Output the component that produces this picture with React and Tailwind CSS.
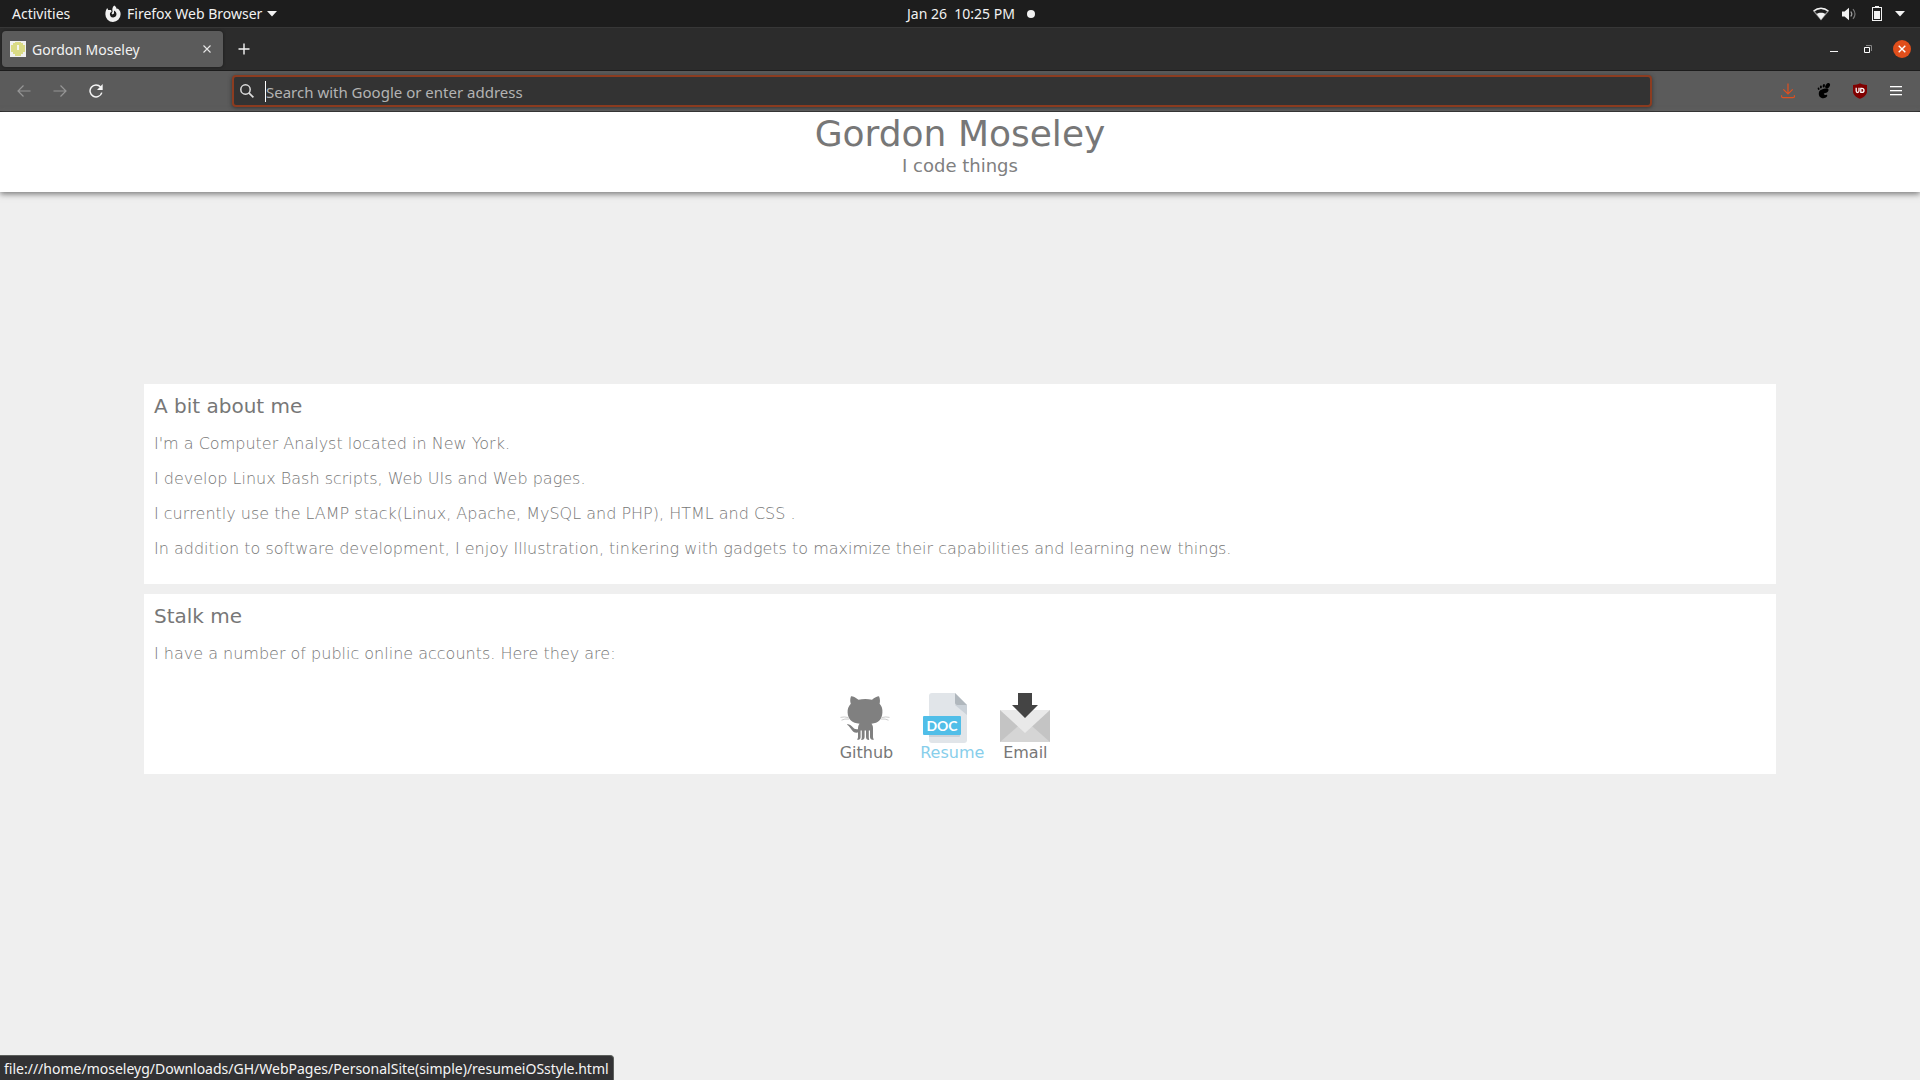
import React from "react";

const paragraphs = [
  "I'm a Computer Analyst located in New York.",
  "I develop Linux Bash scripts, Web UIs and Web pages.",
  "I currently use the LAMP stack(Linux, Apache, MySQL and PHP), HTML and CSS .",
  "In addition to software development, I enjoy Illustration, tinkering with gadgets to maximize their capabilities and learning new things.",
];

function FirefoxIcon() {
  return (
    <svg width="16" height="18" viewBox="0 0 16 18" aria-hidden="true">
      <path
        fill="#f2f2f2"
        d="M9.2 .5C10.8 1.6 11.6 2.8 11.8 4.2L12.6 3.4C14.8 5 15.8 7 15.6 9.6A7.6 7.4 0 0 1 .4 9.4C.3 7 .9 5 2.2 3L3.2 5L6 5L6.6 6.6L5 8C4.4 10.8 6 12.6 8.2 12.5C10.6 12.4 11.8 10.6 11.4 8.6C11 6.8 9.8 6.2 9 5.6L9 8.4L7.4 9.4L6.6 8.4L7.6 6.6C7 4.4 7.4 2 9.2 .5Z"
      />
    </svg>
  );
}

function Caret() {
  return (
    <svg width="10" height="6" viewBox="0 0 10 6" aria-hidden="true">
      <path d="M0 0H10L5 5.5Z" fill="#f2f2f2" />
    </svg>
  );
}

function SystemBar() {
  return (
    <div className="relative flex h-[27px] items-center justify-between bg-[#1d1d1d] text-[14px] text-[#f2f2f2]">
      <div className="flex items-center">
        <button className="ml-3 w-[55px] text-left whitespace-nowrap">Activities</button>
        <button className="ml-[38px] flex items-center whitespace-nowrap">
          <FirefoxIcon />
          <span className="mr-[5px] ml-[6px]">Firefox Web Browser</span>
          <Caret />
        </button>
      </div>
      <button className="absolute left-1/2 flex -translate-x-[53px] items-center whitespace-pre">
        Jan 26  10:25 PM
        <span className="ml-3 size-2 rounded-full bg-[#f2f2f2]" />
      </button>
      <button className="flex items-center" aria-label="System menu">
        <svg width="16" height="14" viewBox="0 0 16 14" aria-hidden="true">
          <path d="M1 4.2C5 .6 11 .6 15 4.2L8 12.5Z" fill="none" stroke="#8e8e8e" strokeWidth="1.2" />
          <path d="M.6 4C5 .4 11 .4 15.4 4" fill="none" stroke="#f2f2f2" strokeWidth="1.4" />
          <path d="M3.5 7C6 5.2 10 5.2 12.5 7L8 12.8Z" fill="#f2f2f2" />
        </svg>
        <svg className="ml-3" width="16" height="14" viewBox="0 0 16 14" aria-hidden="true">
          <path d="M1 4.5H3.6L8 .8V13.2L3.6 9.5H1Z" fill="#f2f2f2" />
          <path d="M9.8 4.5Q11.8 7 9.8 9.5" fill="none" stroke="#a5a5a5" strokeWidth="1.2" />
          <path d="M12 2.2Q16 7 12 11.8" fill="none" stroke="#777777" strokeWidth="1.2" />
        </svg>
        <svg className="ml-[15px]" width="10" height="16" viewBox="0 0 10 16" aria-hidden="true">
          <path d="M3 0H7V1H10V15H0V1H3ZM1 2V14H9V2Z" fill="#f2f2f2" fillRule="evenodd" />
          <path d="M2 5H8V13H2Z" fill="#f2f2f2" />
        </svg>
        <span className="mr-[15px] ml-[13px]">
          <Caret />
        </span>
      </button>
    </div>
  );
}

function TabBar() {
  return (
    <div className="flex h-11 items-center border-t border-b border-t-[#373737] border-b-[#1c1c1c] bg-[#2c2c2c] pl-[2px]">
      <div className="flex h-9 w-[221px] items-center rounded-sm bg-[#5b5b5b] pr-2 pl-2 shadow-[0_0_3px_#1a1a1a]">
        <svg width="16" height="16" viewBox="0 0 16 16" aria-hidden="true">
          <path d="M0 0H16V16H0Z" fill="#f0f0f0" />
          <path d="M5 1H11V2H13V4H15V11H13V13H11V15H5V13H3V11H1V4H3V2H5Z" fill="#dadb86" />
          <path d="M7 4H9V9H7Z" fill="#f4f4ee" />
        </svg>
        <span className="ml-[6px] flex-1 text-[14px] whitespace-nowrap text-[#f2f2f2]">Gordon Moseley</span>
        <button aria-label="Close tab" className="grid size-4 place-items-center">
          <svg width="8" height="8" viewBox="0 0 8 8" aria-hidden="true">
            <path d="M.5 .5L7.5 7.5M7.5 .5L.5 7.5" stroke="#e8e8e8" strokeWidth="1.1" />
          </svg>
        </button>
      </div>
      <button aria-label="New tab" className="ml-[15px] grid size-3 place-items-center">
        <svg width="12" height="12" viewBox="0 0 12 12" aria-hidden="true">
          <path d="M6 .5V11.5M.5 6H11.5" stroke="#f5f5f5" strokeWidth="1.4" />
        </svg>
      </button>
      <div className="mr-[9px] ml-auto flex items-center">
        <button aria-label="Minimize" className="grid size-4 place-items-center">
          <svg width="8" height="8" viewBox="0 0 8 8" aria-hidden="true">
            <path d="M0 6H8V7H0Z" fill="#f5f5f5" />
          </svg>
        </button>
        <button aria-label="Restore" className="ml-[18px] grid size-4 place-items-center">
          <svg width="8" height="8" viewBox="0 0 8 8" aria-hidden="true">
            <path d="M.5 2.5H5.5V7.5H.5Z" fill="none" stroke="#ffffff" />
            <path d="M2 .5H7.5V6" fill="none" stroke="#858585" />
          </svg>
        </button>
        <button aria-label="Close window" className="ml-[17px] grid size-[18px] place-items-center rounded-full bg-[#e04e1b]">
          <svg width="8" height="8" viewBox="0 0 8 8" aria-hidden="true">
            <path d="M.7 .7L7.3 7.3M7.3 .7L.7 7.3" stroke="#ffffff" strokeWidth="1.4" />
          </svg>
        </button>
      </div>
    </div>
  );
}

function Toolbar() {
  return (
    <div className="flex h-[41px] items-center border-b border-[#232323] bg-[#5b5b5b]">
      <div className="ml-[17px] flex w-[215px] shrink-0 items-center gap-[22px]">
        <button aria-label="Back">
          <svg width="14" height="14" viewBox="0 0 14 14" fill="none" stroke="#969696" strokeWidth="1.2" aria-hidden="true">
            <path d="M13.5 7H1M6.5 1.5L1 7L6.5 12.5" />
          </svg>
        </button>
        <button aria-label="Forward">
          <svg width="14" height="14" viewBox="0 0 14 14" fill="none" stroke="#969696" strokeWidth="1.2" aria-hidden="true">
            <path d="M.5 7H13M7.5 1.5L13 7L7.5 12.5" />
          </svg>
        </button>
        <button aria-label="Reload">
          <svg width="14" height="14" viewBox="0 0 14 14" aria-hidden="true">
            <path d="M11.6 3A6 6 0 1 0 12.8 8.6" fill="none" stroke="#f5f5f5" strokeWidth="1.5" />
            <path d="M13.7 0V6H8Z" fill="#f5f5f5" />
          </svg>
        </button>
      </div>
      <label className="flex h-8 flex-1 items-center rounded-sm border-2 border-[#8c3c20] bg-[#333333] shadow-[0_1px_4px_#333333]">
        <svg className="ml-[6px]" width="14" height="14" viewBox="0 0 14 14" fill="none" stroke="#dddddd" aria-hidden="true">
          <circle cx="5.5" cy="5.5" r="4.7" strokeWidth="1.5" />
          <path d="M8.8 8.8L13.4 13.4" strokeWidth="1.7" />
        </svg>
        <span className="ml-[11px] h-[21px] w-px bg-white" />
        <input
          aria-label="Address"
          className="min-w-0 flex-1 pt-0.5 text-[15px] text-white outline-none placeholder:text-[#b3b3b3]"
          placeholder="Search with Google or enter address"
        />
      </label>
      <div className="mr-[18px] ml-[129px] flex items-center">
        <button aria-label="Downloads">
          <svg width="14" height="16" viewBox="0 0 14 16" fill="none" stroke="#e0501f" strokeWidth="1.2" aria-hidden="true">
            <path d="M7 .5V11M2.3 6.3L7 11L11.7 6.3M.6 12.2V13.5Q.6 14.6 2 14.6H12Q13.4 14.6 13.4 13.5V12.2" />
          </svg>
        </button>
        <button aria-label="GNOME Shell integration" className="ml-[22px]">
          <svg width="14" height="16" viewBox="0 0 14 16" fill="#000000" aria-hidden="true">
            <ellipse cx="10.6" cy="2.8" rx="2" ry="3" transform="rotate(35 10.6 2.8)" />
            <ellipse cx="6.8" cy="2.7" rx="1.1" ry="1.8" transform="rotate(10 6.8 2.7)" />
            <ellipse cx="3.9" cy="4" rx="1" ry="1.4" />
            <ellipse cx="1.6" cy="5.7" rx=".9" ry="1.2" transform="rotate(-20 1.6 5.7)" />
            <path d="M9.6 5.6C13 5.4 11.6 9.8 8.2 10C7 10 6.4 10.8 7.2 11.6C8.2 12.6 8.6 11.4 9.8 11.8C11.2 12.6 9.4 15.2 6.4 15.2C3 15.2 1.6 12.6 1.8 10.2C2 7 5.6 5.8 9.6 5.6Z" />
          </svg>
        </button>
        <button aria-label="uBlock Origin" className="ml-[21px]">
          <svg width="16" height="16" viewBox="0 0 16 16" aria-hidden="true">
            <path d="M8 .3C10 1.6 12 2 15 2V8C15 12 12 14.3 8 15.8C4 14.3 1 12 1 8V2C4 2 6 1.6 8 .3Z" fill="#800000" />
            <path d="M4.2 4.8V8Q4.2 9.5 5.5 9.5T7 8V4.8M8.8 5.4H9.8Q12 5.4 12 7.4T9.8 9.4H8.8Z" fill="none" stroke="#ffffff" strokeWidth="1.3" />
          </svg>
        </button>
        <button aria-label="Open menu" className="ml-[22px]">
          <svg width="12" height="10" viewBox="0 0 12 10" aria-hidden="true">
            <path d="M0 0H12V1H0ZM0 4H12V5H0ZM0 8H12V9H0Z" fill="#ffffff" />
            <path d="M0 1H12V2H0ZM0 5H12V6H0ZM0 9H12V10H0Z" fill="#8c8c8c" />
          </svg>
        </button>
      </div>
    </div>
  );
}

function OctocatIcon() {
  return (
    <svg width="50" height="50" viewBox="0 0 50 50" aria-hidden="true">
      <path
        fill="#808080"
        d="M11 3.2C13 3 16 4.5 18.5 6.8C22.5 5.8 28 5.8 32 6.8C34.5 4.5 37 3.2 39 3.2C40.2 6 40.2 8.5 39.6 10.8C42 13.5 42.6 16 42.4 19.5C42 26.5 38.5 30 31.5 30.8C32.8 32.5 33 33.6 33 36V44C33 45.5 34 46 33.8 46.8C31.5 47 30 46 30 44V37.5H28.8V44.5C28.8 46 29.6 46.4 29 47C27 47 26 46 26 44V37.5H24.6V44C24.6 46 23.5 47 21.3 47C21 46.2 21.8 46 21.8 44.5V37.5H20.6V44C20.6 46 19.5 47 17.2 46.8C17 46 18 45.5 18 44V39.6C11.5 40.5 12.3 35.5 7.2 31.8C6.5 31.2 7.5 31 9 31.6C13 33 13 37 18 36.2C18 33.8 18.4 32.2 19.6 30.8C12 30 8 26.5 7.6 19.5C7.4 16 8.5 13.3 10.8 10.8C10 8.5 10 6 11 3.2Z"
      />
      <path d="M8.6 24.6Q4 23.4 .5 24.4M9 26Q4.5 25.6 1.5 27.2M41.4 24.6Q46 23.4 49.5 24.4M41 26Q45.5 25.6 48.5 27.2" fill="none" stroke="#cccccc" />
    </svg>
  );
}

function DocIcon() {
  return (
    <svg width="50" height="50" viewBox="0 0 50 50" aria-hidden="true">
      <path d="M12 0H35L47 12V47Q47 50 44 50H12Q9 50 9 47V3Q9 0 12 0Z" fill="#e1e5e9" />
      <path d="M35 12L47 22V12Z" fill="#cad1d8" />
      <path d="M35 0L47 12H37Q35 12 35 10Z" fill="#b0b7bd" />
      <path d="M9 42H40V43Q40 44 39 44H9Z" fill="#cad1d8" />
      <rect x="3" y="23" width="38" height="19" rx="1" fill="#50bee8" />
      <text x="22" y="38" textAnchor="middle" fill="#ffffff" fontFamily="Lato, sans-serif" fontSize="14" fontWeight="700">
        DOC
      </text>
    </svg>
  );
}

function EmailIcon() {
  return (
    <svg width="50" height="50" viewBox="0 0 50 50" aria-hidden="true">
      <path d="M0 17H50V49H0Z" fill="#c4c4c4" />
      <path d="M0 49L25 27L50 49Z" fill="#d5d5d5" />
      <path d="M0 17H50L25 40Z" fill="#e9e9e9" />
      <path d="M18 0H32V12H38L25 25L12 12H18Z" fill="#444444" />
    </svg>
  );
}

function Card({ title, children }) {
  return (
    <section className="bg-white px-[10px] pt-[10px]">
      <h2 className="text-[20px] leading-6">{title}</h2>
      {children}
    </section>
  );
}

function Paragraph({ children }) {
  return <p className="mt-4 text-[16px] leading-[19px] font-extralight">{children}</p>;
}

export default function App() {
  return (
    <div className="flex min-h-screen flex-col bg-[#efefef] font-['Noto_Sans',sans-serif]">
      <SystemBar />
      <TabBar />
      <Toolbar />
      <div className="flex flex-1 flex-col font-['DejaVu_Sans',sans-serif] text-[#777777]">
        <header className="bg-white pb-[15px] text-center shadow-[0_2px_6px_#777777]">
          <h1 className="text-[36px] leading-[43px]">Gordon Moseley</h1>
          <p className="text-[18px] leading-[22px] text-[#808080]">I code things</p>
        </header>
        <main className="mx-auto mt-48 flex w-[85%] flex-col gap-[10px]">
          <Card title="A bit about me">
            <div className="pb-[26px]">
              {paragraphs.map((text) => (
                <Paragraph key={text}>{text}</Paragraph>
              ))}
            </div>
          </Card>
          <Card title="Stalk me">
            <Paragraph>I have a number of public online accounts. Here they are:</Paragraph>
            <nav className="mt-[30px] flex justify-center pr-[30px] pb-3 text-[16px] leading-[19px]">
              <a href="#github" className="flex flex-col">
                <OctocatIcon />
                Github
              </a>
              <a href="#resume" className="ml-[27px] flex flex-col text-[#87ceeb]">
                <DocIcon />
                Resume
              </a>
              <a href="#email" className="ml-4 flex flex-col items-center">
                <EmailIcon />
                Email
              </a>
            </nav>
          </Card>
        </main>
        <footer className="mt-auto flex">
          <div className="rounded-tr-sm border-t border-r border-[#5c5f5c] bg-[#323234] px-1 pt-0.5 font-['Noto_Sans',sans-serif] text-[14px] leading-[22px] text-[#f5f5f5]">
            file:///home/moseleyg/Downloads/GH/WebPages/PersonalSite(simple)/resumeiOSstyle.html
          </div>
        </footer>
      </div>
    </div>
  );
}
